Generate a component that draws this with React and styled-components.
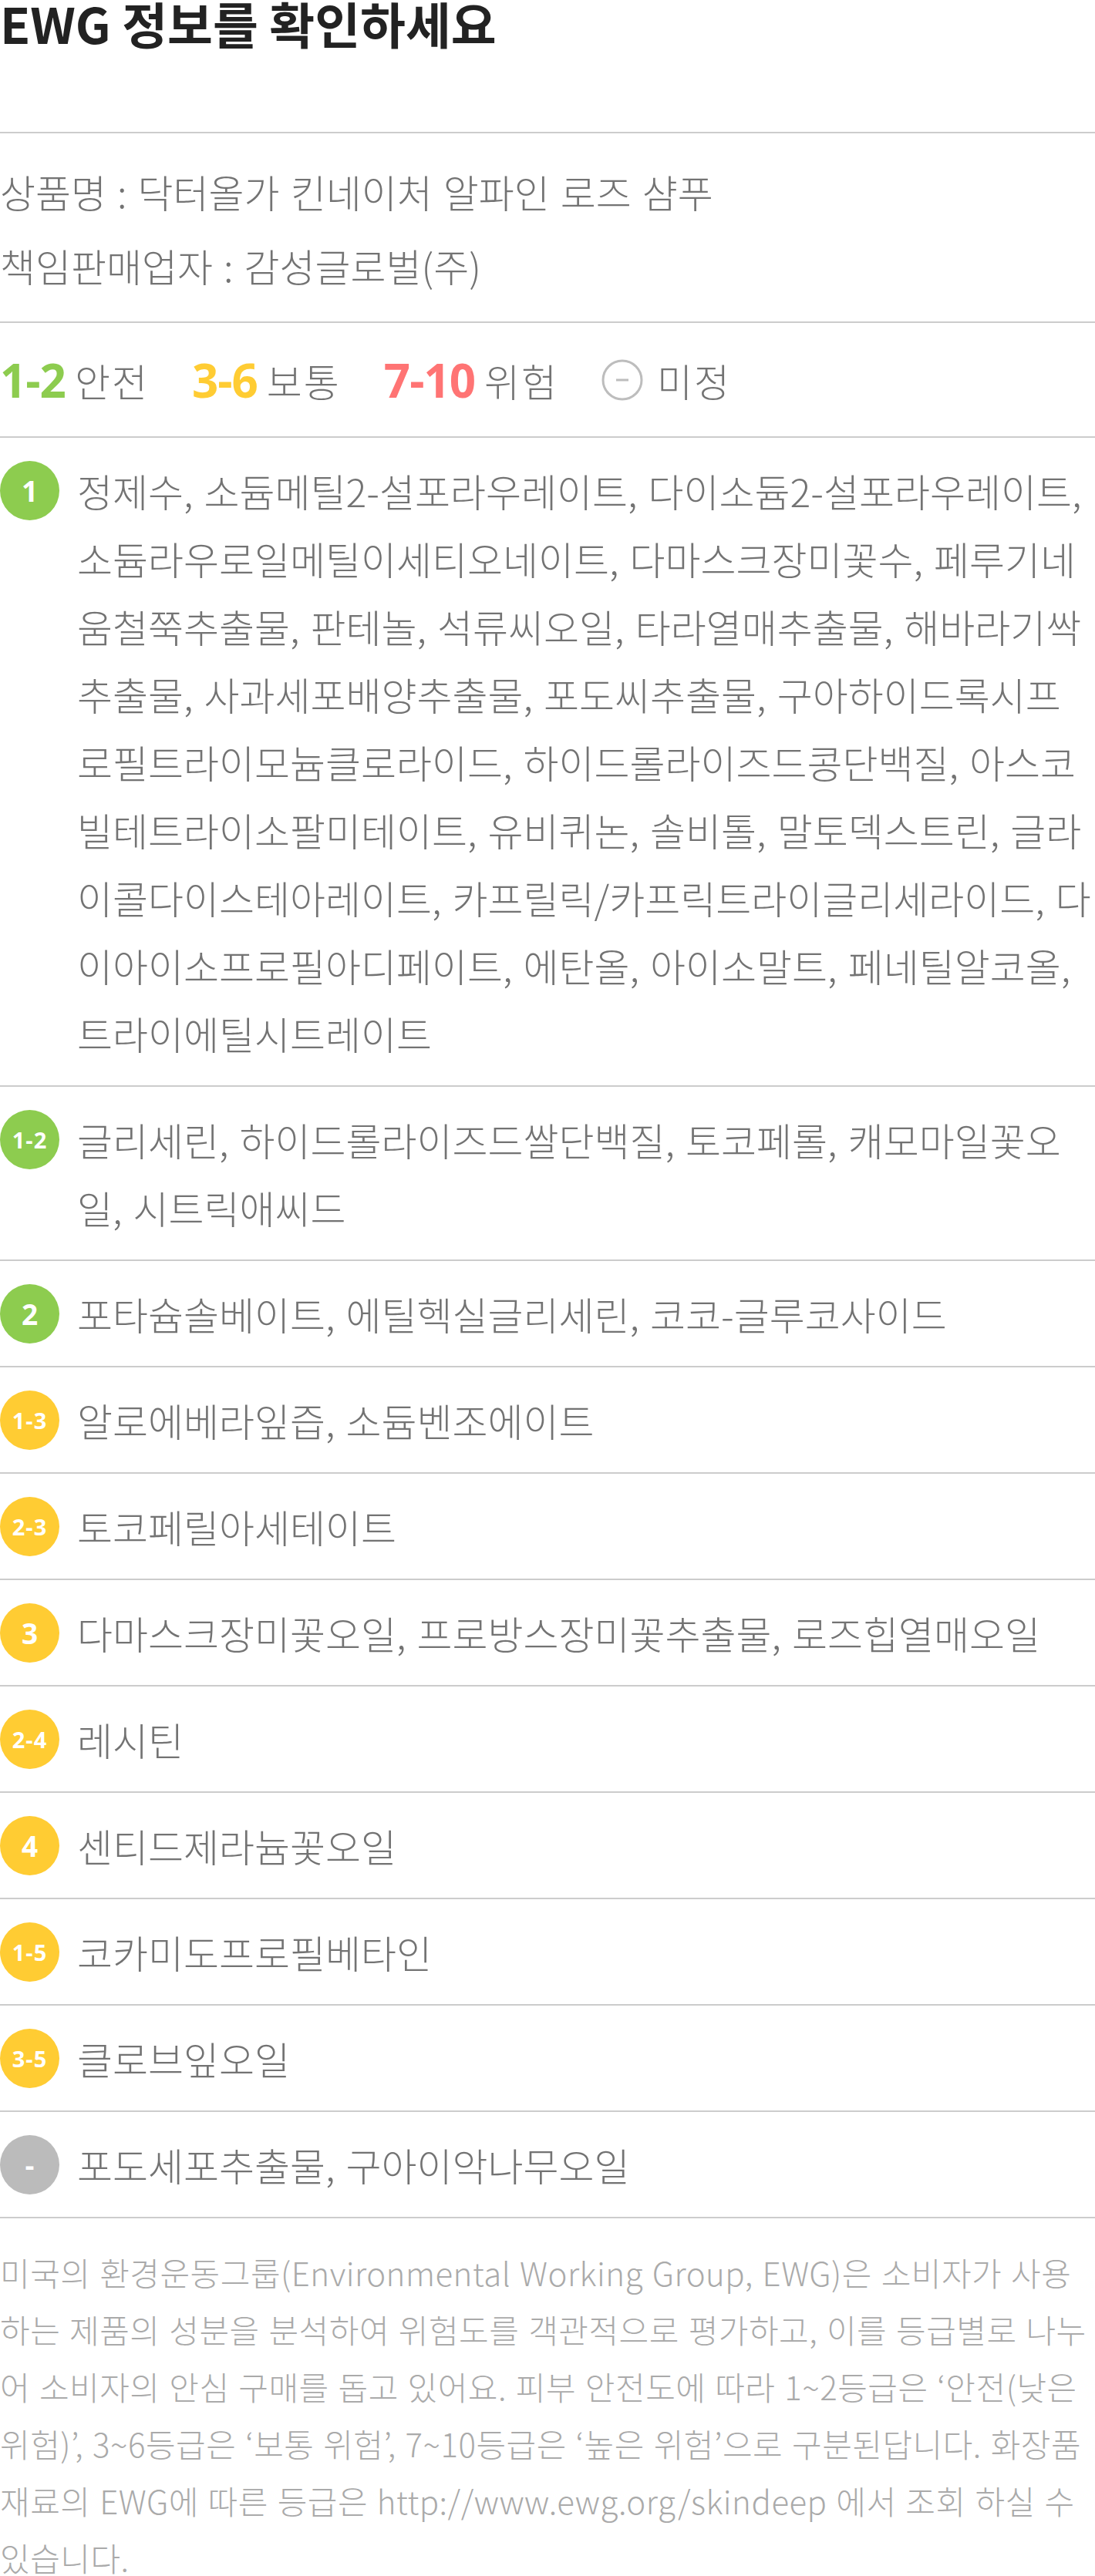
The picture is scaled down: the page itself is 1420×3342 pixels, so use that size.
import React from "react";
import styled, { createGlobalStyle } from "styled-components";

const GlobalStyle = createGlobalStyle`
  body {
    margin: 0;
    background: #fff;
    font-family: "Noto Sans CJK KR", "Noto Sans", sans-serif;
  }
`;

const GRADE_COLORS = {
  green: "#8dcc4f",
  yellow: "#ffcc33",
  gray: "#bbbbbb",
};

const ingredients = [
  {
    grade: "1",
    tone: "green",
    text:
      "정제수, 소듐메틸2-설포라우레이트, 다이소듐2-설포라우레이트, 소듐라우로일메틸이세티오네이트, 다마스크장미꽃수, 페루기네움철쭉추출물, 판테놀, 석류씨오일, 타라열매추출물, 해바라기싹추출물, 사과세포배양추출물, 포도씨추출물, 구아하이드록시프로필트라이모늄클로라이드, 하이드롤라이즈드콩단백질, 아스코빌테트라이소팔미테이트, 유비퀴논, 솔비톨, 말토덱스트린, 글라이콜다이스테아레이트, 카프릴릭/카프릭트라이글리세라이드, 다이아이소프로필아디페이트, 에탄올, 아이소말트, 페네틸알코올, 트라이에틸시트레이트",
  },
  {
    grade: "1-2",
    tone: "green",
    text: "글리세린, 하이드롤라이즈드쌀단백질, 토코페롤, 캐모마일꽃오일, 시트릭애씨드",
  },
  { grade: "2", tone: "green", text: "포타슘솔베이트, 에틸헥실글리세린, 코코-글루코사이드" },
  { grade: "1-3", tone: "yellow", text: "알로에베라잎즙, 소듐벤조에이트" },
  { grade: "2-3", tone: "yellow", text: "토코페릴아세테이트" },
  { grade: "3", tone: "yellow", text: "다마스크장미꽃오일, 프로방스장미꽃추출물, 로즈힙열매오일" },
  { grade: "2-4", tone: "yellow", text: "레시틴" },
  { grade: "4", tone: "yellow", text: "센티드제라늄꽃오일" },
  { grade: "1-5", tone: "yellow", text: "코카미도프로필베타인" },
  { grade: "3-5", tone: "yellow", text: "클로브잎오일" },
  { grade: "-", tone: "gray", text: "포도세포추출물, 구아이악나무오일" },
];

const legend = [
  { range: "1-2", color: "#8dcc4f", label: "안전" },
  { range: "3-6", color: "#ffcc33", label: "보통" },
  { range: "7-10", color: "#ff7474", label: "위험" },
];

export default function App() {
  return (
    <Page>
      <GlobalStyle />
      <Title>EWG 정보를 확인하세요</Title>

      <InfoBlock>
        <InfoLine>상품명 : 닥터올가 킨네이처 알파인 로즈 샴푸</InfoLine>
        <InfoLine>책임판매업자 : 감성글로벌(주)</InfoLine>
      </InfoBlock>

      <Legend>
        {legend.map((l) => (
          <LegendItem key={l.range}>
            <Range $color={l.color}>{l.range}</Range>
            <LegendLabel>{l.label}</LegendLabel>
          </LegendItem>
        ))}
        <LegendItem $wide>
          <UnknownMark>
            <svg width="54" height="54" viewBox="0 0 54 54">
              <circle cx="27" cy="27" r="25" fill="none" stroke="#bdbdbd" strokeWidth="3" />
              <line x1="19" y1="27" x2="35" y2="27" stroke="#bdbdbd" strokeWidth="3" />
            </svg>
          </UnknownMark>
          <LegendLabel>미정</LegendLabel>
        </LegendItem>
      </Legend>

      <List>
        {ingredients.map((item) => (
          <Row key={item.grade}>
            <BadgeCell>
              <Badge $tone={item.tone} $small={item.grade.length > 1}>
                {item.grade}
              </Badge>
            </BadgeCell>
            <RowText>{item.text}</RowText>
          </Row>
        ))}
      </List>

      <Note>
        미국의 환경운동그룹(Environmental Working Group, EWG)은 소비자가 사용하는 제품의 성분을 분석하여
        위험도를 객관적으로 평가하고, 이를 등급별로 나누어 소비자의 안심 구매를 돕고 있어요. 피부 안전도에
        따라 1~2등급은 ‘안전(낮은 위험)’, 3~6등급은 ‘보통 위험’, 7~10등급은 ‘높은 위험’으로 구분된답니다.
        화장품 재료의 EWG에 따른 등급은 http://www.ewg.org/skindeep 에서 조회 하실 수 있습니다.
      </Note>
    </Page>
  );
}

const Page = styled.div`
  width: 1420px;
  color: #737373;
`;

const Title = styled.h1`
  margin: 0;
  padding: 0 0 113px;
  font-size: 64px;
  line-height: 58px;
  font-weight: 700;
  color: #222;
`;

const InfoBlock = styled.div`
  border-top: 2px solid #cccccc;
  padding: 27px 0 25px;
`;

const InfoLine = styled.div`
  font-size: 50px;
  line-height: 96px;
  font-weight: 300;
  word-spacing: 3px;
  color: #737373;
`;

const Legend = styled.div`
  display: flex;
  align-items: center;
  gap: 56px;
  border-top: 2px solid #cccccc;
  padding: 29px 0 28px;
  height: 90px;
`;

const LegendItem = styled.div`
  display: flex;
  align-items: center;
  gap: ${(p) => (p.$wide ? "18px" : "12px")};
`;

const Range = styled.span`
  font-family: "Open Sans", "Noto Sans", sans-serif;
  font-weight: 700;
  font-size: 60px;
  letter-spacing: -1px;
  color: ${(p) => p.$color};
`;

const LegendLabel = styled.span`
  font-size: 50px;
  font-weight: 300;
  letter-spacing: 2px;
  color: #737373;
`;

const UnknownMark = styled.span`
  display: flex;
`;

const List = styled.div`
  border-top: 2px solid #cccccc;
`;

const Row = styled.div`
  display: flex;
  align-items: flex-start;
  gap: 23px;
  padding: 24px 0;
  border-bottom: 2px solid #cccccc;
`;

const BadgeCell = styled.div`
  flex: none;
  height: 88px;
  display: flex;
  align-items: center;
`;

const Badge = styled.div`
  width: 77px;
  height: 77px;
  border-radius: 50%;
  background: ${(p) => GRADE_COLORS[p.$tone]};
  color: #fff;
  display: flex;
  align-items: center;
  justify-content: center;
  font-family: "Open Sans", "Noto Sans", sans-serif;
  font-weight: 700;
  font-size: ${(p) => (p.$small ? "29px" : "37px")};
  letter-spacing: ${(p) => (p.$small ? "1px" : "0")};
`;

const RowText = styled.div`
  flex: 1;
  font-size: 50px;
  line-height: 88px;
  font-weight: 300;
  word-spacing: 3px;
  color: #737373;
  word-break: break-all;
`;

const Note = styled.p`
  margin: 0;
  padding-top: 33px;
  font-size: 42px;
  line-height: 74px;
  font-weight: 300;
  letter-spacing: 0.5px;
  word-spacing: 2px;
  color: #aaaaaa;
`;
